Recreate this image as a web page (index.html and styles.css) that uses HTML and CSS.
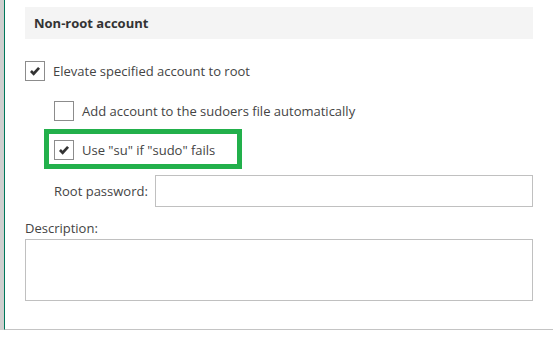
FILE: index.html
```html
<!DOCTYPE html>
<html lang="en">
<head>
  <meta charset="UTF-8">
  <title>Non-root account</title>
  <link rel="stylesheet" href="styles.css">
</head>
<body>
  <div class="page">
    <div class="rail"></div>
    <div class="panel">
      <div class="section-title">Non-root account</div>

      <label class="check-row">
        <span class="box checked">
          <svg viewBox="0 0 20 20"><path d="M5.5 10 L8.5 13 L14.5 6.5"/></svg>
        </span>
        Elevate specified account to root
      </label>

      <div class="sub-options">
        <label class="check-row">
          <span class="box"></span>
          Add account to the sudoers file automatically
        </label>

        <div class="highlight">
          <label class="check-row">
            <span class="box checked">
              <svg viewBox="0 0 20 20"><path d="M5.5 10 L8.5 13 L14.5 6.5"/></svg>
            </span>
            Use "su" if "sudo" fails
          </label>
        </div>

        <div class="field-row">
          <label for="rootpw">Root password:</label>
          <input id="rootpw" type="password">
        </div>
      </div>

      <label class="desc-label" for="desc">Description:</label>
      <textarea id="desc"></textarea>
    </div>
  </div>
</body>
</html>
```

FILE: styles.css
```css
body {
  margin: 0;
  background: #ffffff;
  font-family: 'Open Sans', sans-serif;
  font-size: 13px;
  color: #444;
}
.page {
  display: flex;
  height: 330px;
}
.rail {
  width: 4px;
  background: #cfcfcf;
}
.panel {
  flex: 1;
  border-left: 1px solid #00785a;
  border-bottom: 1px solid #c4c4c4;
  padding: 7px 20px 0 20px;
}
.section-title {
  height: 32px;
  line-height: 32px;
  padding-left: 9px;
  background: #f4f4f4;
  font-weight: 700;
  color: #333;
}
.check-row {
  display: flex;
  align-items: center;
  gap: 8px;
  height: 20px;
  margin-top: 22px;
}
.box {
  width: 18px;
  height: 18px;
  border: 1px solid #8c8c8c;
  background: #fff;
  display: flex;
}
.box svg {
  width: 18px;
  height: 18px;
  fill: none;
  stroke: #333;
  stroke-width: 3;
}
.sub-options {
  padding-left: 29px;
}
.sub-options > .check-row {
  margin-top: 20px;
}
.highlight {
  width: 183px;
  margin: 8px 0 0 -10px;
  border: 5px solid #22b04b;
  padding: 6px 0 4px 5px;
}
.highlight .check-row {
  margin-top: 0;
}
.field-row {
  display: flex;
  align-items: center;
  margin-top: 6px;
}
.field-row label {
  flex-shrink: 0;
  box-sizing: border-box;
  width: 101px;
  padding-right: 8px;
  text-align: right;
  white-space: nowrap;
}
.field-row input {
  flex: 1;
  height: 30px;
  border: 1px solid #c0c0c0;
  padding: 0;
  margin: 0;
}
.desc-label {
  display: block;
  margin-top: 12px;
  line-height: 18px;
  height: 20px;
}
textarea {
  display: block;
  box-sizing: border-box;
  width: 100%;
  height: 62px;
  border: 1px solid #c0c0c0;
  margin: 0;
  resize: none;
}
```
